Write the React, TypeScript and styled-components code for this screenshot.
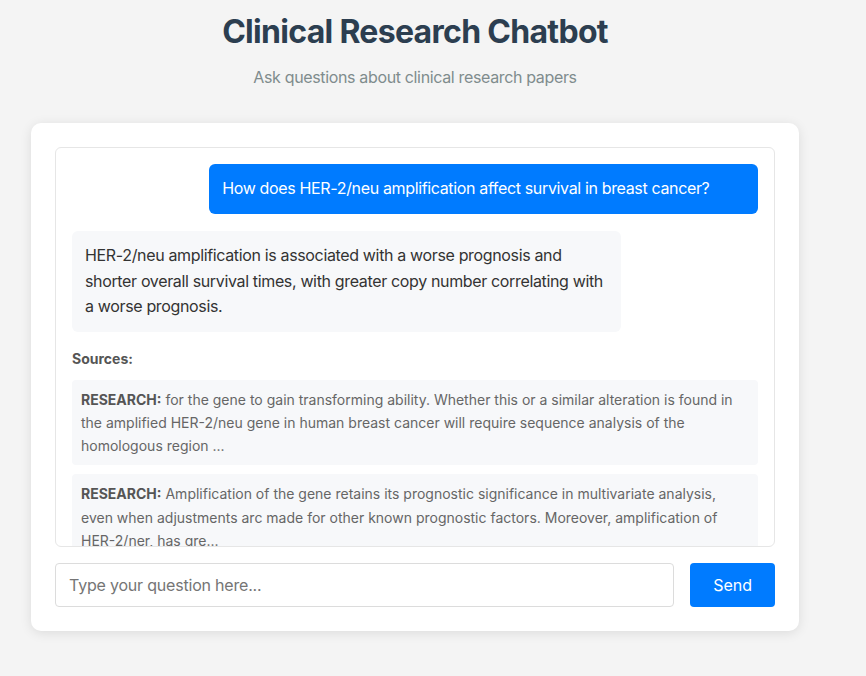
import styled, { createGlobalStyle } from 'styled-components'

interface Source {
  label: string
  text: string
}

const sources: Source[] = [
  {
    label: 'RESEARCH:',
    text:
      'for the gene to gain transforming ability. Whether this or a similar alteration is found in the amplified HER-2/neu gene in human breast cancer will require sequence analysis of the homologous region ...',
  },
  {
    label: 'RESEARCH:',
    text:
      'Amplification of the gene retains its prognostic significance in multivariate analysis, even when adjustments arc made for other known prognostic factors. Moreover, amplification of HER-2/ner, has gre...',
  },
]

export default function App() {
  return (
    <>
      <GlobalStyle />
      <Container>
        <Header>
          <h1>Clinical Research Chatbot</h1>
          <p>Ask questions about clinical research papers</p>
        </Header>

        <Card>
          <Messages>
            <Bubble $user>How does HER-2/neu amplification affect survival in breast cancer?</Bubble>
            <Bubble>
              HER-2/neu amplification is associated with a worse prognosis and shorter overall survival
              times, with greater copy number correlating with a worse prognosis.
            </Bubble>
            <Sources>
              <SourcesTitle>Sources:</SourcesTitle>
              {sources.map((s, i) => (
                <SourceItem key={i}>
                  <strong>{s.label}</strong> {s.text}
                </SourceItem>
              ))}
            </Sources>
          </Messages>

          <InputRow>
            <Input placeholder="Type your question here..." />
            <SendButton>Send</SendButton>
          </InputRow>
        </Card>
      </Container>
    </>
  )
}

// ----- STYLES -----

const GlobalStyle = createGlobalStyle`
  * { box-sizing: border-box; }
  body {
    margin: 0;
    background: #f4f4f4;
    font-family: Inter, "Noto Sans", sans-serif;
    color: #333;
  }
`

const Container = styled.div`
  max-width: 800px;
  margin-left: 15px;
  padding: 13px 16px 40px;
`

const Header = styled.div`
  text-align: center;
  margin-bottom: 34px;

  h1 {
    margin: 0 0 14px;
    font-size: 32px;
    line-height: 1.2;
    font-weight: 700;
    letter-spacing: -0.7px;
    color: #2c3e50;
  }

  p {
    margin: 0;
    font-size: 16px;
    line-height: 1.5;
    letter-spacing: -0.35px;
    color: #7f8c8d;
  }
`

const Card = styled.div`
  background: #fff;
  border-radius: 10px;
  padding: 24px;
  box-shadow: 0 2px 12px rgba(0, 0, 0, 0.1);
`

const Messages = styled.div`
  height: 400px;
  overflow: hidden;
  border: 1px solid #e6e6e6;
  border-radius: 6px;
  padding: 16px;
  display: flex;
  flex-direction: column;
`

const Bubble = styled.div<{ $user?: boolean }>`
  width: 80%;
  flex-shrink: 0;
  align-self: ${({ $user }) => ($user ? 'flex-end' : 'flex-start')};
  background: ${({ $user }) => ($user ? '#007bff' : '#f7f8fa')};
  color: ${({ $user }) => ($user ? '#fff' : '#333')};
  padding: 12px 13px;
  border-radius: 6px;
  font-size: 16px;
  line-height: 1.6;
  letter-spacing: -0.35px;
  margin-bottom: 17px;
`

const Sources = styled.div`
  flex-shrink: 0;
  margin-top: -1px;
`

const SourcesTitle = styled.div`
  font-size: 14px;
  font-weight: 700;
  line-height: 1.6;
  color: #555;
  margin-bottom: 10px;
`

const SourceItem = styled.div`
  background: #f7f8fa;
  border-radius: 4px;
  padding: 8px 9px;
  font-size: 14px;
  line-height: 1.65;
  color: #666;
  margin-bottom: 9px;

  strong {
    color: #555;
  }
`

const InputRow = styled.div`
  display: flex;
  gap: 16px;
  margin-top: 16px;
`

const Input = styled.input`
  flex: 1;
  height: 44px;
  padding: 0 13px;
  border: 1px solid #dcdcdc;
  border-radius: 4px;
  font-family: inherit;
  font-size: 16px;
  letter-spacing: -0.2px;
  color: #333;
  outline: none;

  &::placeholder {
    color: #757575;
  }
`

const SendButton = styled.button`
  height: 44px;
  padding: 0 23px;
  background: #007bff;
  color: #fff;
  border: none;
  border-radius: 4px;
  font-family: inherit;
  font-size: 16px;
  cursor: pointer;
`
